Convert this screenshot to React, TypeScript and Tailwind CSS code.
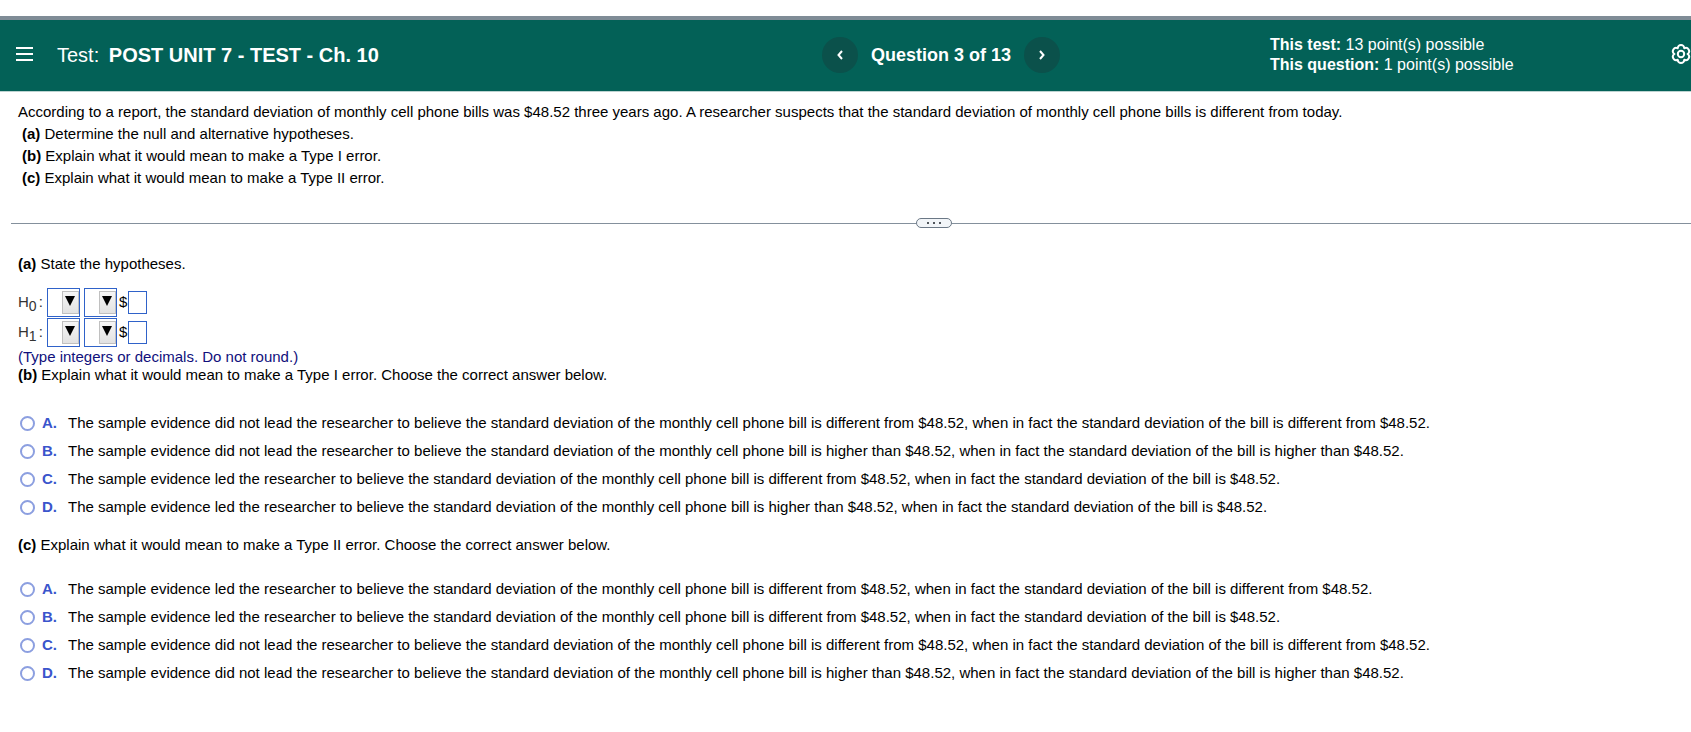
import { useState } from "react";

type Choice = {
  letter: string;
  text: string;
};

const typeOneChoices: Choice[] = [
  {
    letter: "A",
    text: "The sample evidence did not lead the researcher to believe the standard deviation of the monthly cell phone bill is different from $48.52, when in fact the standard deviation of the bill is different from $48.52.",
  },
  {
    letter: "B",
    text: "The sample evidence did not lead the researcher to believe the standard deviation of the monthly cell phone bill is higher than $48.52, when in fact the standard deviation of the bill is higher than $48.52.",
  },
  {
    letter: "C",
    text: "The sample evidence led the researcher to believe the standard deviation of the monthly cell phone bill is different from $48.52, when in fact the standard deviation of the bill is $48.52.",
  },
  {
    letter: "D",
    text: "The sample evidence led the researcher to believe the standard deviation of the monthly cell phone bill is higher than $48.52, when in fact the standard deviation of the bill is $48.52.",
  },
];

const typeTwoChoices: Choice[] = [
  {
    letter: "A",
    text: "The sample evidence led the researcher to believe the standard deviation of the monthly cell phone bill is different from $48.52, when in fact the standard deviation of the bill is different from $48.52.",
  },
  {
    letter: "B",
    text: "The sample evidence led the researcher to believe the standard deviation of the monthly cell phone bill is different from $48.52, when in fact the standard deviation of the bill is $48.52.",
  },
  {
    letter: "C",
    text: "The sample evidence did not lead the researcher to believe the standard deviation of the monthly cell phone bill is different from $48.52, when in fact the standard deviation of the bill is different from $48.52.",
  },
  {
    letter: "D",
    text: "The sample evidence did not lead the researcher to believe the standard deviation of the monthly cell phone bill is higher than $48.52, when in fact the standard deviation of the bill is higher than $48.52.",
  },
];

const GearIcon = () => (
  <svg
    viewBox="0 0 20 20"
    className="size-5"
    fill="none"
    stroke="currentColor"
    strokeWidth="2"
    strokeLinejoin="round"
  >
    <path d="M6.7 4.300A3.300 3.300 0 0 1 13.300 4.300A3.300 3.300 0 0 1 16.600 10A3.300 3.300 0 0 1 13.300 15.700A3.300 3.300 0 0 1 6.700 15.700A3.300 3.300 0 0 1 3.400 10A3.300 3.300 0 0 1 6.700 4.300z" />
    <circle cx="10" cy="10" r="3.2" />
  </svg>
);

type NavButtonProps = {
  label: string;
  path: string;
};

const NavButton = ({ label, path }: NavButtonProps) => (
  <button
    type="button"
    aria-label={label}
    className="flex size-9 items-center justify-center rounded-full bg-[#0b514b]"
  >
    <svg
      viewBox="0 0 6 10"
      className="h-[10px] w-[6px]"
      fill="none"
      stroke="currentColor"
      strokeWidth="2"
    >
      <path d={path} />
    </svg>
  </button>
);

const Header = () => (
  <header className="grid h-[76px] grid-cols-[822fr_448fr_421fr] items-center border-t-4 border-b border-t-[#7f8c96] border-b-[#bcd3d0] bg-[#036157] pb-0.5 text-white">
    <div className="flex items-center pl-4">
      <button type="button" aria-label="Menu" className="mr-6 pb-0.5">
        <svg
          viewBox="0 0 17 16"
          className="h-4 w-[17px]"
          stroke="currentColor"
          strokeWidth="2"
        >
          <path d="M0 2h17M0 8h17M0 14h17" />
        </svg>
      </button>
      <h1 className="text-xl">
        Test: <b className="ml-1">POST UNIT 7 - TEST - Ch. 10</b>
      </h1>
    </div>
    <nav className="flex items-center gap-[13px]">
      <NavButton label="Previous question" path="M5 1 1.500 5 5 9" />
      <span className="text-lg font-bold">Question 3 of 13</span>
      <NavButton label="Next question" path="M1 1 4.500 5 1 9" />
    </nav>
    <div className="flex items-center justify-between">
      <div className="text-base/5">
        <p>
          <b>This test:</b> 13 point(s) possible
        </p>
        <p>
          <b>This question:</b> 1 point(s) possible
        </p>
      </div>
      <button type="button" aria-label="Settings" className="pb-0.5">
        <GearIcon />
      </button>
    </div>
  </header>
);

const SymbolSelect = ({ label }: { label: string }) => (
  <div className="relative h-[29px] w-[33px]">
    <select
      aria-label={label}
      className="size-full appearance-none border border-[#2f62c9] bg-white"
    >
      <option value=""></option>
    </select>
    <span className="pointer-events-none absolute top-[3px] right-px flex h-[23px] w-[17px] items-center justify-center border border-[#c0c0c0] bg-linear-to-b from-[#f6f6f6] to-[#e2e2e2] pr-px pb-0.5">
      <svg viewBox="0 0 10 10" className="size-[10px]">
        <path d="M0 0h10L5 10z" />
      </svg>
    </span>
  </div>
);

const HypothesisRow = ({ index }: { index: number }) => (
  <div className="flex h-[30px] items-center">
    <span className="flex w-[29px] pt-1 text-[#333333]">
      H<span className="pt-1 pr-0.5 text-sm/5">{index}</span>:
    </span>
    <div className="flex gap-1">
      <SymbolSelect label={`H${index} parameter`} />
      <SymbolSelect label={`H${index} relation`} />
    </div>
    <span className="ml-0.5">$</span>
    <input
      type="text"
      aria-label={`H${index} value`}
      className="ml-px h-[23px] w-[19px] border border-[#2f62c9]"
    />
  </div>
);

type ChoiceListProps = {
  name: string;
  choices: Choice[];
};

const ChoiceList = ({ name, choices }: ChoiceListProps) => {
  const [selected, setSelected] = useState("");

  return (
    <div className="flex flex-col gap-2 pl-0.5">
      {choices.map(({ letter, text }) => (
        <label key={letter} className="flex items-center">
          <input
            type="radio"
            name={name}
            checked={selected === letter}
            onChange={() => setSelected(letter)}
            className="size-[15px] shrink-0 appearance-none rounded-full border-2 border-[#8c9fe0] checked:border-4"
          />
          <b className="ml-[7px] w-[26px] shrink-0 text-[#3a55cc]">{letter}.</b>
          <span>{text}</span>
        </label>
      ))}
    </div>
  );
};

export default function App() {
  return (
    <div className="min-h-screen bg-white pt-4 font-['Liberation_Sans',Arial,sans-serif] text-[15px]/5 text-black">
      <Header />
      <main>
        <section className="px-[18px] pt-[9px] leading-[22px]">
          <p>
            According to a report, the standard deviation of monthly cell phone
            bills was $48.52 three years ago. A researcher suspects that the
            standard deviation of monthly cell phone bills is different from
            today.
          </p>
          <div className="pl-1">
            <p>
              <b>(a)</b> Determine the null and alternative hypotheses.
            </p>
            <p>
              <b>(b)</b> Explain what it would mean to make a Type I error.
            </p>
            <p>
              <b>(c)</b> Explain what it would mean to make a Type II error.
            </p>
          </div>
        </section>

        <div className="mt-[29px] ml-[11px] flex items-center">
          <span className="h-px grow-905 bg-[#84909c]" />
          <button
            type="button"
            aria-label="Resize panels"
            className="flex h-[10px] w-9 items-center justify-center gap-1 rounded-full border border-[#6b7886] bg-[#f2f5f8]"
          >
            <span className="size-0.5 bg-[#50565c]" />
            <span className="size-0.5 bg-[#50565c]" />
            <span className="size-0.5 bg-[#50565c]" />
          </button>
          <span className="h-px grow-739 bg-[#84909c]" />
        </div>

        <section className="px-[18px] pt-[26px]">
          <p>
            <b>(a)</b> State the hypotheses.
          </p>
          <div className="mt-[13px] mb-px">
            <HypothesisRow index={0} />
            <HypothesisRow index={1} />
          </div>
          <div className="leading-[18px]">
            <p className="text-[#10107c]">
              (Type integers or decimals. Do not round.)
            </p>
            <p>
              <b>(b)</b> Explain what it would mean to make a Type I error.
              Choose the correct answer below.
            </p>
          </div>
          <div className="mt-[29px]">
            <ChoiceList name="type-one" choices={typeOneChoices} />
          </div>
          <p className="mt-[18px] mb-6">
            <b>(c)</b> Explain what it would mean to make a Type II error.
            Choose the correct answer below.
          </p>
          <ChoiceList name="type-two" choices={typeTwoChoices} />
        </section>
      </main>
    </div>
  );
}
